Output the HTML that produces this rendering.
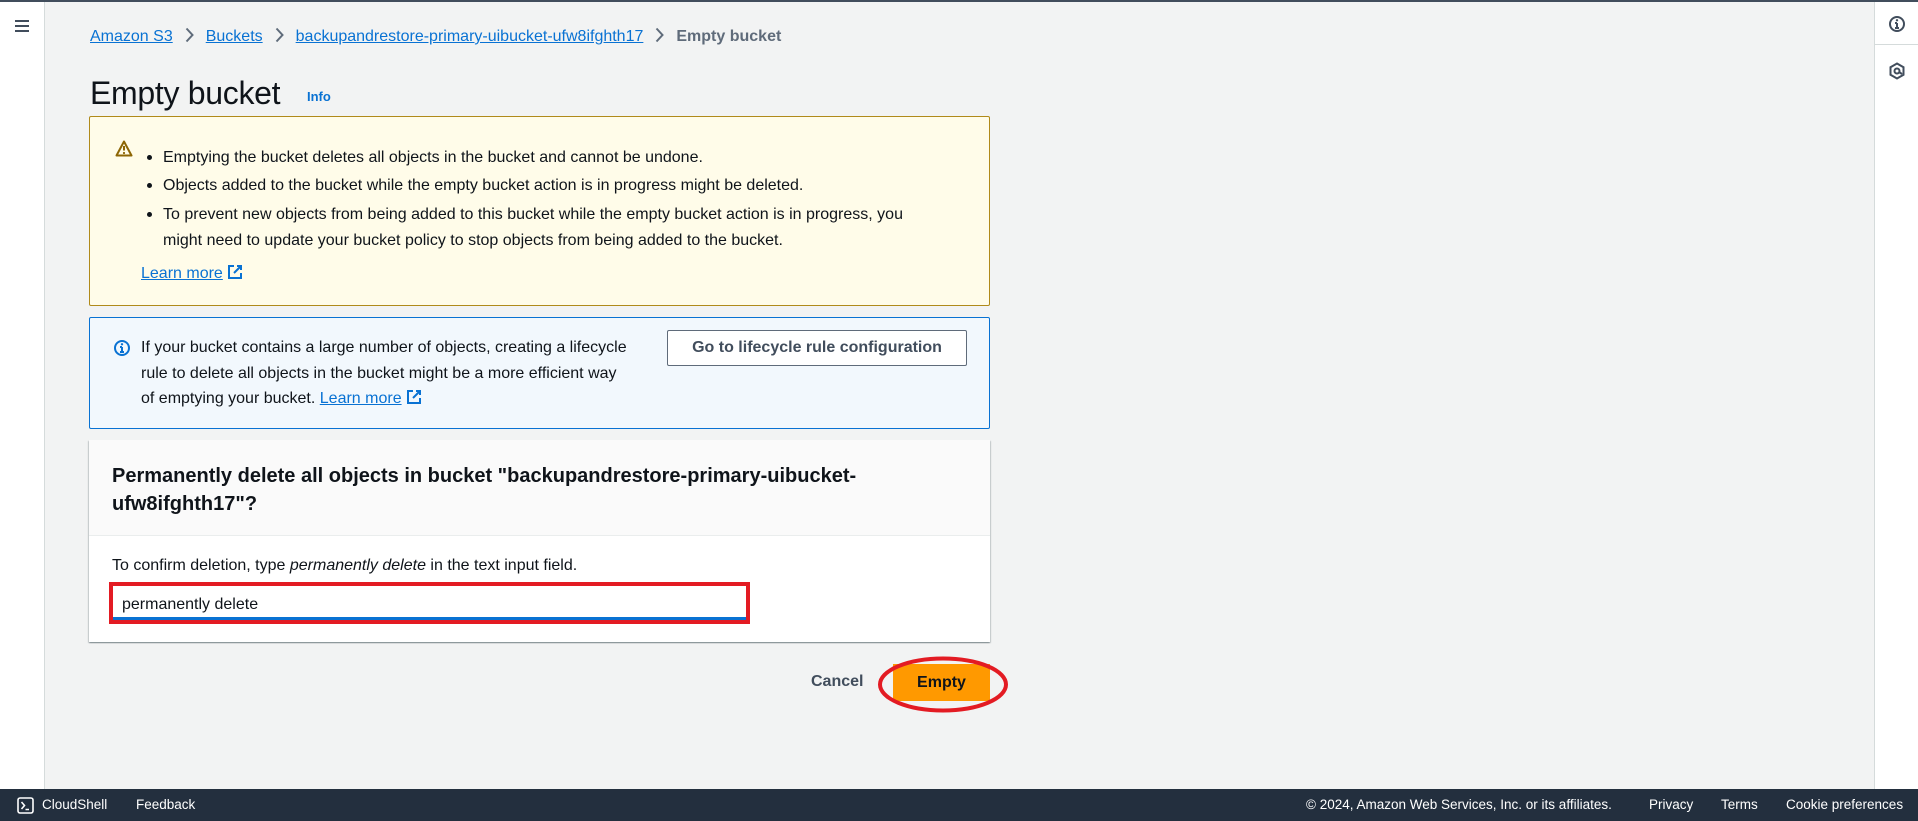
<!DOCTYPE html>
<html><head><meta charset="utf-8"><style>
*{box-sizing:border-box;margin:0;padding:0}
body{width:1918px;height:821px;overflow:hidden;background:#f2f3f3;font-family:"Liberation Sans",Arial,sans-serif;color:#0f1b2a;position:relative;font-size:16px}
.abs{position:absolute}
a{color:#0972d3;text-decoration:underline}
.topline{left:0;top:0;width:1918px;height:2px;background:#414d5c}
.leftnav{left:0;top:2px;width:45px;height:787px;background:#fff;border-right:1px solid #d5dbdb}
.rightnav{left:1874px;top:2px;width:44px;height:787px;background:#fff;border-left:1px solid #d5dbdb}
.bc{top:27px;left:90px;font-size:16px;white-space:nowrap;line-height:20px}
.bc a{color:#0972d3}
.bc .sep{display:inline-block;margin:0 12px;vertical-align:-2px}
.bc b{color:#5f6b7a}
h1{position:absolute;left:90px;top:75px;font-size:32px;font-weight:normal;letter-spacing:-0.3px;color:#0f141a}
.info{left:307px;top:89px;font-size:13px;font-weight:bold;color:#0972d3}
.warn{left:89px;top:116px;width:901px;height:190px;background:#fffce9;border:1px solid #b08a1a;border-radius:2px}
.infob{left:89px;top:317px;width:901px;height:112px;background:#f2f8fd;border:1px solid #0972d3;border-radius:2px}
.t{font-size:16px;line-height:26px;white-space:nowrap;color:#0f141a}
.dot{width:5px;height:5px;border-radius:50%;background:#0f141a}
.btn{left:667px;top:330px;width:300px;height:36px;border:1px solid #5f6b7a;border-radius:2px;background:#fff;font-weight:bold;font-size:16px;color:#414d5c;text-align:center;line-height:34px}
.card{left:89px;top:440px;width:901px;height:202px;background:#fff;box-shadow:0 1px 1px rgba(0,28,36,.3),1px 1px 1px rgba(0,28,36,.15),-1px 1px 1px rgba(0,28,36,.15)}
.cardh{left:0;top:0;width:901px;height:96px;background:#fafafa;border-bottom:1px solid #eaeded}
.ct{left:23px;top:22px;font-size:20px;font-weight:bold;line-height:28px;color:#0f141a}
.footer{left:0;top:789px;width:1918px;height:32px;background:#232f3e;color:#fff;font-size:13.5px;line-height:32px}
</style></head><body>
<div class="abs topline"></div>
<div class="abs leftnav">
 <svg class="abs" style="left:14px;top:17px" width="16" height="14"><path d="M1 2H15M1 7H15M1 12H15" stroke="#414d5c" stroke-width="2"/></svg>
</div>
<div class="abs rightnav">
 <svg class="abs" style="left:13px;top:13px" width="18" height="18" viewBox="0 0 18 18"><circle cx="9" cy="9" r="7" fill="none" stroke="#414d5c" stroke-width="2"/><path d="M9 8V13M7 13H11M7 8H9" stroke="#414d5c" stroke-width="2"/><circle cx="9" cy="5.3" r="1.2" fill="#414d5c"/></svg>
 <div class="abs" style="left:0;top:42px;width:44px;height:1px;background:#d5dbdb"></div>
 <svg class="abs" style="left:13px;top:60px" width="18" height="18" viewBox="0 0 18 18"><path d="M9 1.5L15.5 5.2V12.8L9 16.5L2.5 12.8V5.2Z" fill="none" stroke="#414d5c" stroke-width="2"/><circle cx="9" cy="9" r="2.5" fill="none" stroke="#414d5c" stroke-width="2"/><path d="M11 10L14 12" stroke="#414d5c" stroke-width="2"/></svg>
</div>

<div class="abs bc"><a>Amazon S3</a><svg class="sep" width="9" height="16" viewBox="0 0 9 16"><path d="M1.5 1.5L7.5 8L1.5 14.5" fill="none" stroke="#5f6b7a" stroke-width="2"/></svg><a>Buckets</a><svg class="sep" width="9" height="16" viewBox="0 0 9 16"><path d="M1.5 1.5L7.5 8L1.5 14.5" fill="none" stroke="#5f6b7a" stroke-width="2"/></svg><a>backupandrestore-primary-uibucket-ufw8ifghth17</a><svg class="sep" width="9" height="16" viewBox="0 0 9 16"><path d="M1.5 1.5L7.5 8L1.5 14.5" fill="none" stroke="#5f6b7a" stroke-width="2"/></svg><b>Empty bucket</b></div>
<h1>Empty bucket</h1>
<div class="abs info">Info</div>

<div class="abs warn">
 <svg class="abs" style="left:25px;top:23px" width="18" height="17" viewBox="0 0 18 17"><path d="M9 1.5L16.5 15.5H1.5Z" fill="none" stroke="#8d6605" stroke-width="2" stroke-linejoin="round"/><path d="M9 6V10.5" stroke="#8d6605" stroke-width="2"/><circle cx="9" cy="13" r="1.1" fill="#8d6605"/></svg>
 <div class="abs dot" style="left:57px;top:38px"></div>
 <div class="abs dot" style="left:57px;top:66px"></div>
 <div class="abs dot" style="left:57px;top:95px"></div>
 <div class="abs t" style="left:73px;top:28px">Emptying the bucket deletes all objects in the bucket and cannot be undone.</div>
 <div class="abs t" style="left:73px;top:56px">Objects added to the bucket while the empty bucket action is in progress might be deleted.</div>
 <div class="abs t" style="left:73px;top:85px">To prevent new objects from being added to this bucket while the empty bucket action is in progress, you<br>might need to update your bucket policy to stop objects from being added to the bucket.</div>
 <div class="abs t" style="left:51px;top:144px"><a>Learn more</a> <svg width="16" height="16" viewBox="0 0 16 16" style="vertical-align:-2px"><path d="M7 2H2V14H14V9M10 2H14V6M14 2L7 9" fill="none" stroke="#0972d3" stroke-width="2"/></svg></div>
</div>

<div class="abs infob">
 <svg class="abs" style="left:23px;top:21px" width="18" height="18" viewBox="0 0 18 18"><circle cx="9" cy="9" r="7" fill="none" stroke="#0972d3" stroke-width="2"/><path d="M9 8V13M7 13H11M7 8H9" stroke="#0972d3" stroke-width="2"/><circle cx="9" cy="5.3" r="1.2" fill="#0972d3"/></svg>
 <div class="abs t" style="left:51px;top:17px;line-height:25.5px">If your bucket contains a large number of objects, creating a lifecycle<br>rule to delete all objects in the bucket might be a more efficient way<br>of emptying your bucket. <a>Learn more</a> <svg width="16" height="16" viewBox="0 0 16 16" style="vertical-align:-2px"><path d="M7 2H2V14H14V9M10 2H14V6M14 2L7 9" fill="none" stroke="#0972d3" stroke-width="2"/></svg></div>
</div>
<div class="abs btn">Go to lifecycle rule configuration</div>

<div class="abs card">
 <div class="abs cardh"></div>
 <div class="abs ct">Permanently delete all objects in bucket "backupandrestore-primary-uibucket-<br>ufw8ifghth17"?</div>
 <div class="abs t" style="left:23px;top:113px">To confirm deletion, type <i>permanently delete</i> in the text input field.</div>
 <div class="abs" style="left:20px;top:142px;width:641px;height:42px;border:4px solid #e31b23;background:#fff">
  <div class="abs" style="left:0;bottom:0;width:633px;height:3px;background:#0972d3"></div>
  <div class="abs t" style="left:9px;top:6px">permanently delete</div>
 </div>
</div>

<div class="abs" style="left:811px;top:673px;font-size:16px;font-weight:bold;color:#414d5c">Cancel</div>
<div class="abs" style="left:893px;top:664px;width:97px;height:37px;background:#ff9900;font-weight:bold;font-size:16px;color:#0f141a;text-align:center;line-height:37px">Empty</div>
<svg class="abs" style="left:875px;top:654px" width="136" height="61"><ellipse cx="68" cy="30.5" rx="63" ry="26" fill="none" stroke="#e31b23" stroke-width="4"/></svg>

<div class="abs footer">
 <svg class="abs" style="left:17px;top:8px" width="17" height="17" viewBox="0 0 17 17"><rect x="1" y="1" width="15" height="15" rx="2" fill="none" stroke="#fff" stroke-width="1.6"/><path d="M4.5 5L7.5 8.5L4.5 12M8.5 12.5H12" stroke="#fff" stroke-width="1.6" fill="none"/></svg>
 <span class="abs" style="left:42px">CloudShell</span>
 <span class="abs" style="left:136px">Feedback</span>
 <span class="abs" style="left:1306px">© 2024, Amazon Web Services, Inc. or its affiliates.</span>
 <span class="abs" style="left:1649px">Privacy</span>
 <span class="abs" style="left:1721px">Terms</span>
 <span class="abs" style="left:1786px">Cookie preferences</span>
</div>
</body></html>
